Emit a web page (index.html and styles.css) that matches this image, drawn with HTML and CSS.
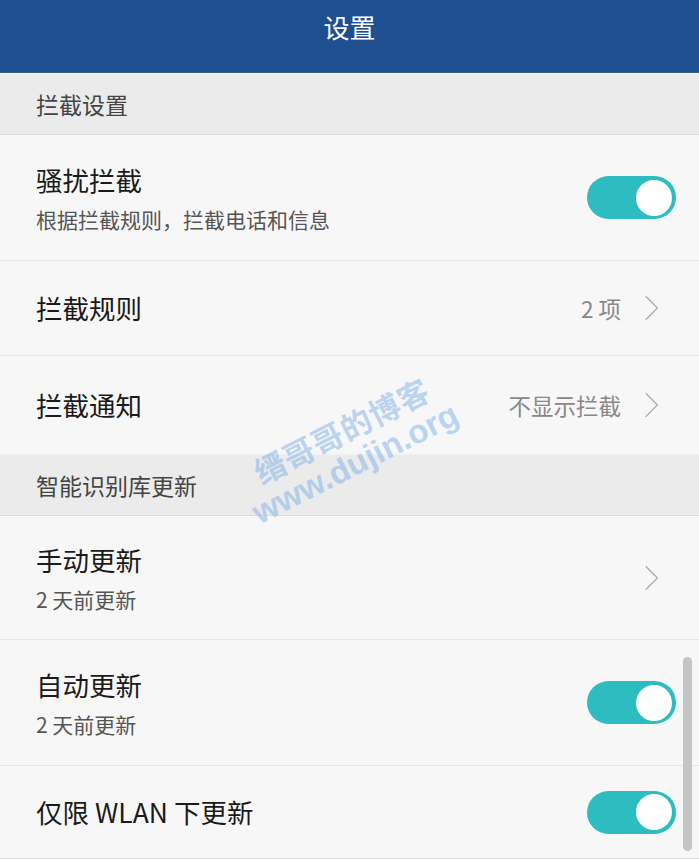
FILE: index.html
```html
<!DOCTYPE html>
<html lang="zh-CN">
<head>
    <meta charset="UTF-8">
    <meta name="viewport" content="width=device-width, initial-scale=1.0">
    <title>设置</title>
    <link rel="stylesheet" href="styles.css">
</head>
<body>
<div class="topbar">设置</div>

<div class="page">
    <div class="group-title">拦截设置</div>

    <div class="row row-tall">
        <div class="texts">
            <div class="title">骚扰拦截</div>
            <div class="sub">根据拦截规则，拦截电话和信息</div>
        </div>
        <span class="switch on"><span class="knob"></span></span>
    </div>

    <div class="row">
        <div class="texts">
            <div class="title">拦截规则</div>
        </div>
        <span class="value">2 项</span>
        <svg class="chevron" viewBox="0 0 20 30"><path d="M3 2 L16 15 L3 28"/></svg>
    </div>

    <div class="row row-last">
        <div class="texts">
            <div class="title">拦截通知</div>
        </div>
        <span class="value">不显示拦截</span>
        <svg class="chevron" viewBox="0 0 20 30"><path d="M3 2 L16 15 L3 28"/></svg>
    </div>

    <div class="group-title">智能识别库更新</div>

    <div class="row row-tall row-first">
        <div class="texts">
            <div class="title">手动更新</div>
            <div class="sub">2 天前更新</div>
        </div>
        <svg class="chevron" viewBox="0 0 20 30"><path d="M3 2 L16 15 L3 28"/></svg>
    </div>

    <div class="row row-tall">
        <div class="texts">
            <div class="title">自动更新</div>
            <div class="sub">2 天前更新</div>
        </div>
        <span class="switch on"><span class="knob"></span></span>
    </div>

    <div class="row row-end">
        <div class="texts">
            <div class="title">仅限 WLAN 下更新</div>
        </div>
        <span class="switch on"><span class="knob"></span></span>
    </div>

    <div class="scrollbar"></div>

    <!-- blog watermark -->
    <div class="mark">
        <div class="mark-name">缙哥哥的博客</div>
        <div class="mark-url">www.dujin.org</div>
    </div>
</div>
</body>
</html>
```

FILE: styles.css
```css
body {
    font-family: "Noto Sans CJK SC", "Noto Sans", sans-serif;
    background-color: #f7f7f7;
    margin: 0;
    padding: 0;
    width: 699px;
    height: 860px;
    overflow: hidden;
}
.topbar {
    height: 73px;
    background-color: #1e4f8e;
    color: #fff;
    font-size: 26px;
    text-align: center;
    line-height: 54px;
    box-sizing: border-box;
    border-bottom: 1px solid #3a5f8a;
}
.page {
    position: relative;
}
.group-title {
    height: 62px;
    background-color: #ebebeb;
    color: #444;
    font-size: 23px;
    padding-left: 36px;
    display: flex;
    align-items: center;
    box-sizing: border-box;
    border-bottom: 1px solid #dcdcdc;
    border-top: 1px solid #f0f0f0;
}
.row {
    height: 95px;
    display: flex;
    align-items: center;
    padding: 0 23px 0 36px;
    border-bottom: 1px solid #e6e6e6;
    box-sizing: border-box;
    background-color: #f7f7f7;
}
.row-tall {
    height: 126px;
}
.row-first {
    height: 124px;
}
.row-last {
    height: 98px;
    border-bottom: none;
}
.row-end {
    height: 93px;
    border-bottom-color: #dedede;
}
.texts {
    flex: 1;
}
.title {
    font-size: 26.5px;
    color: #1a1a1a;
    line-height: 36px;
}
.sub {
    font-size: 21px;
    color: #555;
    line-height: 30px;
    margin-top: 6px;
}
.value {
    font-size: 22.5px;
    color: #888;
    margin-right: 22px;
}
.chevron {
    width: 18px;
    height: 28px;
    margin-right: 15px;
}
.chevron path {
    fill: none;
    stroke: #ababab;
    stroke-width: 1.4;
}
.switch {
    width: 89px;
    height: 43px;
    border-radius: 22px;
    background-color: #2dbcbf;
    display: flex;
    align-items: center;
    justify-content: flex-end;
    padding: 0 4px;
    box-sizing: border-box;
}
.knob {
    width: 36px;
    height: 36px;
    border-radius: 50%;
    background-color: #fff;
}
.scrollbar {
    position: absolute;
    right: 7px;
    top: 584px;
    width: 9px;
    height: 194px;
    border-radius: 5px;
    background-color: #c4c4c4;
}
.mark {
    position: absolute;
    left: 280px;
    top: 376px;
    color: rgba(125, 175, 232, 0.5);
    font-weight: bold;
    transform: rotate(-27deg);
    transform-origin: left bottom;
    pointer-events: none;
}
.mark-name {
    font-family: "Noto Sans CJK SC", sans-serif;
    font-size: 31px;
    line-height: 38px;
    letter-spacing: 1px;
}
.mark-url {
    font-family: "Liberation Sans", sans-serif;
    font-size: 33px;
    line-height: 34px;
    margin-left: -20px;
}
```
